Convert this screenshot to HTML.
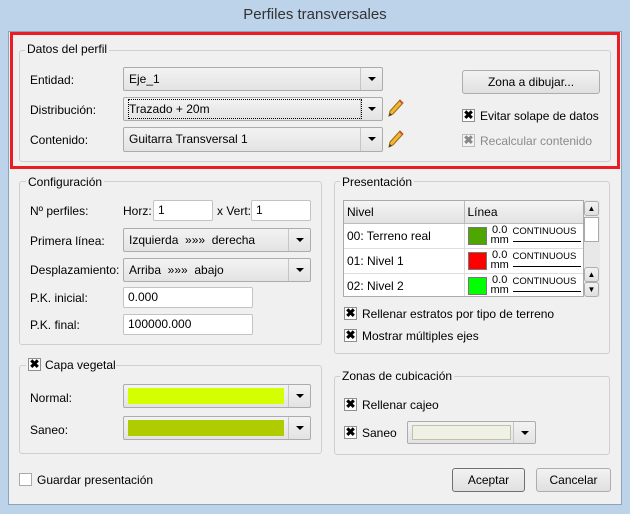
<!DOCTYPE html>
<html><head><meta charset="utf-8"><style>
*{box-sizing:border-box;margin:0;padding:0}
body{width:630px;height:514px;background:#bcd3ea;font-family:"Liberation Sans",sans-serif;font-size:12px;color:#000;position:relative;overflow:hidden}
.a{position:absolute}
.title{left:0;width:630px;top:6px;text-align:center;font-size:15px;color:#333}
.content{left:8px;top:31px;width:614px;height:474px;background:#f0f0f0;border:1px solid #8ba3bd}
.red{left:10px;top:32px;width:610px;height:137px;border:3px solid #ec1c24}
.grp{border:1px solid #cfcfcf;border-radius:3px}
.leg{background:#f0f0f0;padding:0 2px;line-height:14px}
.combo{border:1px solid #acacac;border-radius:2px;background:linear-gradient(#f3f3f3,#e3e3e3);padding-left:5px;line-height:22px}
.combo .arr{position:absolute;right:0;top:0;bottom:0;width:22px;border-left:1px solid #c5c5c5}
.combo .arr:after{content:"";position:absolute;left:7px;top:9px;border-left:4px solid transparent;border-right:4px solid transparent;border-top:4px solid #000}
.inp{border:1px solid #c3c3c3;border-radius:2px;background:#fff;padding-left:4px;line-height:19px}
.cb{width:13px;height:13px;border:1px solid #8f8f8f;background:#fff;font-size:12px;line-height:11px;text-align:center;font-weight:bold}
.btn{border:1px solid #adadad;border-radius:3px;background:linear-gradient(#f2f2f2,#e0e0e0);text-align:center;line-height:22px}
.pen{width:18px;height:20px}
td{border-right:1px solid #ddd;border-bottom:1px solid #ddd}
</style></head><body>
<div class="a title">Perfiles transversales</div>
<div class="a content"></div>
<div class="a red"></div>

<div class="a grp" style="left:19px;top:50px;width:592px;height:112px"></div>
<div class="a leg" style="left:25px;top:42px">Datos del perfil</div>
<div class="a" style="left:30px;top:73px">Entidad:</div>
<div class="a combo" style="left:123px;top:67px;width:260px;height:24px">Eje_1<div class="arr"></div></div>
<div class="a" style="left:30px;top:103px">Distribución:</div>
<div class="a combo" style="left:123px;top:97px;width:260px;height:24px"><span style="outline:1px dotted #000;display:inline-block;width:232px;line-height:18px;margin-top:1px">Trazado + 20m</span><div class="arr"></div></div>
<div class="a" style="left:30px;top:133px">Contenido:</div>
<div class="a combo" style="left:123px;top:127px;width:260px;height:25px">Guitarra Transversal 1<div class="arr"></div></div>
<svg class="a pen" style="left:386px;top:98px" viewBox="0 0 18 20"><path d="M3 18 L4 13 L14 2 L17 5 L7 16 Z" fill="#f2b632" stroke="#9a6a10" stroke-width="1"/><path d="M14 2 L17 5 L16 6 L13 3Z" fill="#d44"/><path d="M3 18 L4 15 L6 17Z" fill="#333"/></svg>
<svg class="a pen" style="left:386px;top:129px" viewBox="0 0 18 20"><path d="M3 18 L4 13 L14 2 L17 5 L7 16 Z" fill="#f2b632" stroke="#9a6a10" stroke-width="1"/><path d="M14 2 L17 5 L16 6 L13 3Z" fill="#d44"/><path d="M3 18 L4 15 L6 17Z" fill="#333"/></svg>
<div class="a btn" style="left:462px;top:70px;width:138px;height:24px">Zona a dibujar...</div>
<div class="a cb" style="left:462px;top:109px">✖</div>
<div class="a" style="left:480px;top:109px">Evitar solape de datos</div>
<div class="a cb" style="left:462px;top:134px;color:#888;border-color:#bbb;background:#f4f4f4">✖</div>
<div class="a" style="left:480px;top:134px;color:#8a8a8a">Recalcular contenido</div>

<div class="a grp" style="left:19px;top:181px;width:303px;height:164px"></div>
<div class="a leg" style="left:26px;top:175px">Configuración</div>
<div class="a" style="left:30px;top:204px">Nº perfiles:</div>
<div class="a" style="left:123px;top:204px">Horz:</div>
<div class="a inp" style="left:153px;top:200px;width:60px;height:21px">1</div>
<div class="a" style="left:217px;top:204px">x Vert:</div>
<div class="a inp" style="left:251px;top:200px;width:60px;height:21px">1</div>
<div class="a" style="left:30px;top:234px">Primera línea:</div>
<div class="a combo" style="left:123px;top:228px;width:188px;height:24px">Izquierda &nbsp;»»» &nbsp;derecha<div class="arr"></div></div>
<div class="a" style="left:30px;top:263px">Desplazamiento:</div>
<div class="a combo" style="left:123px;top:258px;width:188px;height:24px">Arriba &nbsp;»»» &nbsp;abajo<div class="arr"></div></div>
<div class="a" style="left:30px;top:291px">P.K. inicial:</div>
<div class="a inp" style="left:123px;top:287px;width:130px;height:21px">0.000</div>
<div class="a" style="left:30px;top:318px">P.K. final:</div>
<div class="a inp" style="left:123px;top:314px;width:130px;height:21px">100000.000</div>

<div class="a grp" style="left:19px;top:365px;width:303px;height:89px"></div>
<div class="a" style="left:26px;top:357px;background:#f0f0f0;width:90px;height:16px"></div>
<div class="a cb" style="left:28px;top:358px">✖</div>
<div class="a" style="left:45px;top:358px">Capa vegetal</div>
<div class="a" style="left:30px;top:391px">Normal:</div>
<div class="a combo" style="left:123px;top:384px;width:188px;height:24px;padding:3px 26px 3px 4px"><div style="background:#d4ff00;height:100%"></div><div class="arr"></div></div>
<div class="a" style="left:30px;top:423px">Saneo:</div>
<div class="a combo" style="left:123px;top:416px;width:188px;height:24px;padding:3px 26px 3px 4px"><div style="background:#aecc00;height:100%"></div><div class="arr"></div></div>

<div class="a cb" style="left:19px;top:473px;border-color:#aaa"></div>
<div class="a" style="left:37px;top:473px">Guardar presentación</div>

<div class="a grp" style="left:334px;top:181px;width:276px;height:173px"></div>
<div class="a leg" style="left:340px;top:175px">Presentación</div>
<div class="a" style="left:343px;top:200px;width:241px;height:97px;background:#fff;border:1px solid #aaa;overflow:hidden">
<table style="border-collapse:collapse;width:240px;font-size:12px">
<tr style="height:22px;background:linear-gradient(#f5f5f5,#e2e2e2)"><td style="width:120px;padding-left:3px;border-color:#bbb">Nivel</td><td style="padding-left:3px;border-color:#bbb">Línea</td></tr>
<tr style="height:25px"><td style="padding-left:3px">00: Terreno real</td><td><div style="position:relative;height:24px"><div class="a" style="left:3px;top:3px;width:19px;height:18px;background:#4ea600;border:1px solid #777"></div><div class="a" style="left:26px;top:1px;font-size:11px;line-height:10px;text-align:center">0.0<br>mm</div><div class="a" style="left:48px;top:2px;font-size:9.5px;border-bottom:1px solid #000;width:68px;padding-bottom:4px">CONTINUOUS</div></div></td></tr>
<tr style="height:25px"><td style="padding-left:3px">01: Nivel 1</td><td><div style="position:relative;height:24px"><div class="a" style="left:3px;top:3px;width:19px;height:18px;background:#f00;border:1px solid #777"></div><div class="a" style="left:26px;top:1px;font-size:11px;line-height:10px;text-align:center">0.0<br>mm</div><div class="a" style="left:48px;top:2px;font-size:9.5px;border-bottom:1px solid #000;width:68px;padding-bottom:4px">CONTINUOUS</div></div></td></tr>
<tr style="height:25px"><td style="padding-left:3px">02: Nivel 2</td><td><div style="position:relative;height:24px"><div class="a" style="left:3px;top:3px;width:19px;height:18px;background:#0f0;border:1px solid #777"></div><div class="a" style="left:26px;top:1px;font-size:11px;line-height:10px;text-align:center">0.0<br>mm</div><div class="a" style="left:48px;top:2px;font-size:9.5px;border-bottom:1px solid #000;width:68px;padding-bottom:4px">CONTINUOUS</div></div></td></tr>
</table></div>
<div class="a" style="left:584px;top:200px;width:16px;height:97px;background:#e8e8e8"></div>
<div class="a btn" style="left:584px;top:201px;width:15px;height:15px;font-size:8px;line-height:13px">▲</div>
<div class="a" style="left:584px;top:217px;width:15px;height:25px;background:#fff;border:1px solid #aaa"></div>
<div class="a btn" style="left:584px;top:267px;width:15px;height:15px;font-size:8px;line-height:13px">▲</div>
<div class="a btn" style="left:584px;top:282px;width:15px;height:15px;font-size:8px;line-height:13px">▼</div>
<div class="a cb" style="left:344px;top:307px">✖</div>
<div class="a" style="left:362px;top:307px">Rellenar estratos por tipo de terreno</div>
<div class="a cb" style="left:344px;top:329px">✖</div>
<div class="a" style="left:362px;top:329px">Mostrar múltiples ejes</div>

<div class="a grp" style="left:334px;top:376px;width:276px;height:79px"></div>
<div class="a leg" style="left:340px;top:369px">Zonas de cubicación</div>
<div class="a cb" style="left:344px;top:398px">✖</div>
<div class="a" style="left:362px;top:398px">Rellenar cajeo</div>
<div class="a cb" style="left:344px;top:426px">✖</div>
<div class="a" style="left:362px;top:426px">Saneo</div>
<div class="a combo" style="left:407px;top:421px;width:129px;height:23px;padding:3px 24px 3px 4px"><div style="background:#f0f0e6;height:100%;border:1px solid #bcc3a8"></div><div class="arr"></div></div>

<div class="a btn" style="left:452px;top:468px;width:73px;height:24px;border-color:#707070">Aceptar</div>
<div class="a btn" style="left:536px;top:468px;width:75px;height:24px">Cancelar</div>
</body></html>
